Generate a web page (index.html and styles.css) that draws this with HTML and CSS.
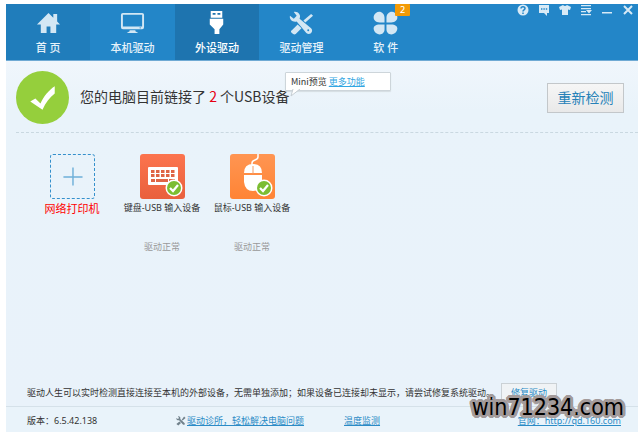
FILE: index.html
```html
<!DOCTYPE html>
<html lang="zh-CN">
<head>
<meta charset="utf-8">
<title>外设驱动</title>
<link rel="stylesheet" href="styles.css">
</head>
<body>
<div class="window">
  <header class="header">
    <nav class="nav">
      <a class="tab home" href="#">
        <svg class="tab-icon" viewBox="0 0 26 26"><path d="M13 2 1 14h4v9h6v-7h4v7h6v-9h4l-3-3V3h-4v4z"/></svg>
        <span>首 页</span>
      </a>
      <a class="tab" href="#">
        <svg class="tab-icon" viewBox="0 0 26 26"><path fill-rule="evenodd" d="M3 2h20q2 0 2 2v13q0 2-2 2H3q-2 0-2-2V4q0-2 2-2zm0 2v12h20V4zM10 20h6v1l3 2H7l3-2z"/><circle class="dot" cx="21" cy="17.5" r=".7"/></svg>
        <span>本机驱动</span>
      </a>
      <a class="tab active" href="#">
        <svg class="tab-icon" viewBox="0 0 26 26"><path fill-rule="evenodd" d="M7 0h12v7H7zm2 2v2h3V2zm5 0v2h3V2zM6 8h14v6l-4 5v5h-5v-5l-5-5z"/></svg>
        <span>外设驱动</span>
      </a>
      <a class="tab" href="#">
        <svg class="tab-icon" viewBox="0 0 26 26"><path fill-rule="evenodd" d="M5 1c4-1 8 3 6 7l12 10c3 3-1 8-5 5L8 11c-4 1-8-2-7-6l4 3 3-3zm15 18a1 1 0 1 0 0 2 1 1 0 0 0 0-2z"/><path d="m23 3 2 2-8 7-2-2zM9 14l4 4-6 6q-2 1-4-1t0-3z"/></svg>
        <span>驱动管理</span>
      </a>
      <a class="tab" href="#">
        <svg class="tab-icon" viewBox="0 0 26 26"><path d="M12 12H7C0 12-1 5 3 2c4-3 9 0 9 5zM14 12V7c0-5 5-8 9-5 4 3 3 10-4 10zM12 14v5c0 5-5 7-9 4-4-4-3-9 4-9zM14 14h5c7 0 8 5 4 9-4 3-9 1-9-4z"/></svg>
        <span>软 件</span>
        <span class="badge">2</span>
      </a>
    </nav>
    <div class="tools">
      <button class="tool" aria-label="帮助"><svg viewBox="0 0 12 12"><circle cx="6" cy="6" r="5.5"/><path class="cut" d="M4 4.5C4 2 8 2 8 4.5 8 6 6 5.8 6 7.5M6 8.6v1.3"/></svg></button>
      <button class="tool" aria-label="反馈"><svg viewBox="0 0 12 12"><path d="M1 1h10v8H9v3L6 9H1z"/><path class="cut" d="M3 5h1.4M5.4 5h1.4M7.8 5h1.4"/></svg></button>
      <button class="tool" aria-label="换肤"><svg viewBox="0 0 12 12"><path d="M4 1q2 2 4 0l4 2-1 3-2-.6V11H3V5.400L1 6 0 3z"/></svg></button>
      <button class="tool" aria-label="菜单"><svg viewBox="0 0 12 12"><path d="M1 1h10v1.300H1zM1 4h10v1.300H1zM1 7h5v1.300H1zM1 10h10v1.300H1zM6 6h6L9 9.500z"/></svg></button>
      <button class="tool" aria-label="最小化"><svg viewBox="0 0 12 12"><path d="M1 8h10v1.500H1z"/></svg></button>
      <button class="tool" aria-label="关闭"><svg viewBox="0 0 12 12"><path class="line" d="m2 2 8 8m0-8-8 8"/></svg></button>
    </div>
  </header>

  <main class="main">
    <section class="summary">
      <svg class="status-icon" viewBox="0 0 52 52"><circle cx="26" cy="26" r="26" fill="#95cf3c"/><path d="m14 30 5-3 5 5c3-7 8-13 14-17v7c-5 4-9 9-12 16z" fill="#fff"/></svg>
      <h1 class="title">您的电脑目前链接了 <b class="count">2</b> 个USB设备
        <span class="tip">Mini预览 <a href="#">更多功能</a>
          <svg class="tip-tail" viewBox="0 0 12 8"><path d="M3 0 1 7l9-7" fill="#fff" stroke="#c5cdd2"/></svg>
        </span>
      </h1>
      <button class="rescan">重新检测</button>
    </section>

    <ul class="devices">
      <li class="device">
        <button class="add" aria-label="添加网络打印机"><svg viewBox="0 0 45 45"><path d="M13 23h20M23 13v19" stroke="#6eb0d9" stroke-width="1.500"/></svg></button>
        <span class="name printer">网络打印机</span>
      </li>
      <li class="device">
        <svg class="tile" viewBox="0 0 45 45">
          <defs>
            <linearGradient id="red" x2="0" y2="1"><stop stop-color="#fc744e"/><stop offset="1" stop-color="#e9603d"/></linearGradient>
            <linearGradient id="orange" x2="0" y2="1"><stop stop-color="#ff9552"/><stop offset="1" stop-color="#ff8435"/></linearGradient>
          </defs>
          <rect width="45" height="45" rx="3" fill="url(#red)"/>
          <rect x="8" y="13" width="30" height="18" rx="1" fill="#fff"/>
          <path d="M11 17.500h24M11 21.500h24" stroke="#df6545" stroke-width="3" stroke-dasharray="3.500 1.500"/>
          <path d="M11 26.500h4m1 0h12m1 0h6" stroke="#df6545" stroke-width="3"/>
          <circle cx="34" cy="34" r="8.500" fill="#fff"/><circle cx="34" cy="34" r="7" fill="#7cbd32"/><path d="m30 34 3 3 5-6" fill="none" stroke="#fff" stroke-width="2.200"/>
        </svg>
        <span class="name">键盘-USB 输入设备</span>
        <span class="state">驱动正常</span>
      </li>
      <li class="device">
        <svg class="tile" viewBox="0 0 45 45">
          <rect width="45" height="45" rx="3" fill="url(#orange)"/>
          <path d="M28 0v3q0 2-3 3t-3 3v3" fill="none" stroke="#fff" stroke-width="1.500"/>
          <path d="M23 10q-9 0-9 9h18q0-9-9-9zM14 21h18v7q-1 9-9 9t-9-9z" fill="#fff"/><path d="M23 12v8" stroke="#f29c68"/>
          <circle cx="34" cy="34" r="8.500" fill="#fff"/><circle cx="34" cy="34" r="7" fill="#7cbd32"/><path d="m30 34 3 3 5-6" fill="none" stroke="#fff" stroke-width="2.200"/>
        </svg>
        <span class="name">鼠标-USB 输入设备</span>
        <span class="state">驱动正常</span>
      </li>
    </ul>

    <div class="note">
      <p>驱动人生可以实时检测直接连接至本机的外部设备，无需单独添加；如果设备已连接却未显示，请尝试修复系统驱动。</p>
      <button class="repair">修复驱动</button>
    </div>
  </main>

  <footer class="footer">
    <span class="version">版本：6.5.42.138</span>
    <svg class="clinic-icon" viewBox="0 0 26 26"><path d="M5 1c4-1 8 3 6 7l11 10c3 3-1 7-4 4L8 11c-4 1-8-2-7-6l4 3 3-3zM21 1l4 4-8 7-2-2zM9 14l4 4-7 7-5-4z"/></svg>
    <a class="clinic" href="#">驱动诊所，轻松解决电脑问题</a>
    <a href="#">温度监测</a>
    <a class="site" href="#">官网：http://qd.160.com</a>
  </footer>
  <div class="watermark">win71234.com</div>
</div>
</body>
</html>
```

FILE: styles.css
```css
* { box-sizing: border-box; }

body {
  margin: 0;
  background: #fff;
  color: #333;
  font: 9px/14px "Noto Sans", "Noto Sans CJK SC", sans-serif;
}

button {
  padding: 0;
  border: 0;
  background: none;
  font: inherit;
}

a { color: #2b8bc6; }
p { margin: 0; }
svg { display: block; }

.window {
  position: relative;
  display: flex;
  flex-direction: column;
  min-height: 100vh;
  padding: 4px 0 0 6px;
}

.header {
  display: flex;
  justify-content: space-between;
  height: 57px;
  border-bottom: 1px solid #70aad4;
  background: #2386c8;
}

.nav {
  display: grid;
  grid-template-columns: repeat(5, 1fr);
  flex: 0 0 422px;
}

.tab {
  position: relative;
  display: flex;
  flex-direction: column;
  align-items: center;
  gap: 5px;
  padding-top: 7px;
  color: #e6f2fa;
  font-size: 11px;
  font-weight: 500;
  text-decoration: none;
}

.home { background: #207dbb; }
.active { background: #1e74af; color: #fff; }

.tab-icon {
  width: 25px;
  height: 25px;
  fill: #d3e7f4;
}

.active .tab-icon { fill: #fff; }
.dot { fill: #2386c8; }

.badge {
  position: absolute;
  top: 0;
  right: 18px;
  width: 15px;
  border-radius: 1px;
  background: #f39a05;
  color: #fff;
  font-size: 9px;
  line-height: 12px;
  text-align: center;
}

.tools {
  display: flex;
  gap: 9px;
  padding-right: 4px;
}

.tool { width: 12px; height: 12px; }
.tool svg { width: 12px; height: 12px; fill: #d8eaf6; }
.tool .cut { fill: none; stroke: #2386c8; stroke-width: 1.5; }
.tool .line { stroke: #d8eaf6; stroke-width: 2; }

.main {
  display: flex;
  flex: 1;
  flex-direction: column;
  background: linear-gradient(#f0f6fc, #e9f3fa 50px, #e9f2fa);
}

.summary {
  display: flex;
  align-items: center;
  height: 72px;
  margin-left: 10px;
  padding: 2px 14px 0 0;
  border-bottom: 1px dashed #c9d8e0;
}

.status-icon { width: 53px; height: 53px; }

.title {
  position: relative;
  margin: 0 0 4px 11px;
  font-family: "Noto Sans CJK SC", sans-serif;
  font-size: 14px;
  font-weight: 400;
  line-height: 24px;
}

.count { color: #e60012; font-weight: 400; }

.tip {
  position: absolute;
  top: -12px;
  left: 205px;
  width: 106px;
  padding: 1px 5px;
  border: 1px solid #cdd5da;
  border-radius: 1px;
  background: #fff;
  box-shadow: 0 1px 1px #d5dde2;
  font-size: 9px;
  line-height: 15px;
  white-space: nowrap;
}

.tip a { color: #32a6e2; }
.tip-tail { position: absolute; top: 16px; left: 4px; width: 12px; height: 8px; }

.rescan {
  width: 77px;
  height: 30px;
  margin-left: auto;
  border: 1px solid #c3c7ca;
  background: linear-gradient(#f6f6f6, #e9e9e9);
  color: #2681b8;
  font-size: 14px;
}

.devices {
  display: flex;
  margin: 21px 0 0 21px;
  padding: 0;
  list-style: none;
}

.device {
  display: flex;
  flex: 0 0 90px;
  flex-direction: column;
  align-items: center;
  white-space: nowrap;
}

.tile, .add { width: 45px; height: 45px; }
.add { border: 1px dashed #3490cc; border-radius: 3px; }
.name { margin-top: 2px; }
.printer { margin-top: 3px; color: #f00; font-size: 11px; }
.state { margin-top: 25px; color: #999; }

.note {
  display: flex;
  align-items: center;
  gap: 6px;
  margin-top: auto;
  padding: 0 0 4px 21px;
  white-space: nowrap;
}

.repair {
  width: 56px;
  height: 19px;
  border: 1px solid #cbd1d5;
  background: #f0f3f5;
  color: #2b8bc6;
}

.footer {
  display: flex;
  align-items: center;
  height: 26px;
  padding: 2px 17px 0 21px;
  border-top: 1px solid #d5e1e9;
  background: #e9f3fa;
  white-space: nowrap;
}

.version { flex: 0 0 149px; }
.clinic-icon { width: 10px; height: 10px; margin-right: 1px; fill: #71818b; }
.clinic { margin-right: 40px; }
.site { margin-left: auto; }

.watermark {
  --halo: #a39b9b;
  position: absolute;
  right: 14px;
  bottom: 9px;
  color: #000;
  font: 23px/32px "DejaVu Sans Condensed", "DejaVu Sans", sans-serif;
  text-shadow:
    3px 0 var(--halo), -3px 0 var(--halo), 0 3px var(--halo), 0 -3px var(--halo),
    2px 2px var(--halo), -2px 2px var(--halo), 2px -2px var(--halo), -2px -2px var(--halo),
    3px 1px var(--halo), -3px 1px var(--halo), 3px -1px var(--halo), -3px -1px var(--halo),
    1px 3px var(--halo), -1px 3px var(--halo), 1px -3px var(--halo), -1px -3px var(--halo);
}
```
